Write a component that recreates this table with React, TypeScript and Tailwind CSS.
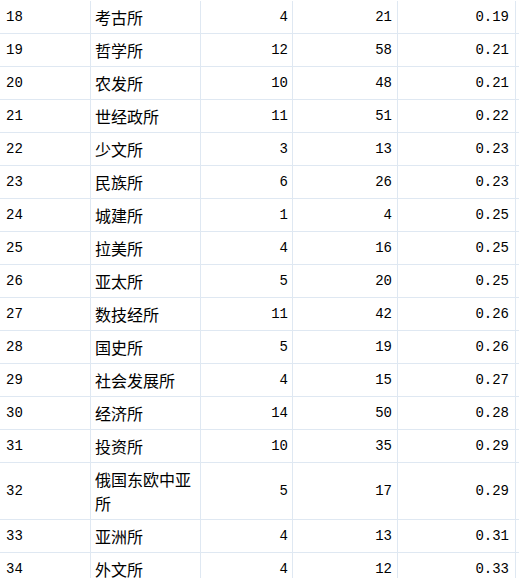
import React from "react";

const rows: [string, string, string, string, string][] = [
  ["18", "考古所", "4", "21", "0.19"],
  ["19", "哲学所", "12", "58", "0.21"],
  ["20", "农发所", "10", "48", "0.21"],
  ["21", "世经政所", "11", "51", "0.22"],
  ["22", "少文所", "3", "13", "0.23"],
  ["23", "民族所", "6", "26", "0.23"],
  ["24", "城建所", "1", "4", "0.25"],
  ["25", "拉美所", "4", "16", "0.25"],
  ["26", "亚太所", "5", "20", "0.25"],
  ["27", "数技经所", "11", "42", "0.26"],
  ["28", "国史所", "5", "19", "0.26"],
  ["29", "社会发展所", "4", "15", "0.27"],
  ["30", "经济所", "14", "50", "0.28"],
  ["31", "投资所", "10", "35", "0.29"],
  ["32", "俄国东欧中亚所", "5", "17", "0.29"],
  ["33", "亚洲所", "4", "13", "0.31"],
  ["34", "外文所", "4", "12", "0.33"],
];

const mono = "font-['Liberation_Mono','Noto_Sans_CJK_SC',monospace] text-[14px]";
const cjk = "font-['Noto_Sans_CJK_SC',sans-serif] text-[16px]";

export default function App() {
  return (
    <div className="w-[519px] h-[578px] overflow-hidden bg-white pt-[1px] text-black">
      {rows.map((r) => (
        <div
          key={r[0]}
          className="grid grid-cols-[91px_110px_92px_105px_118px] border-b border-[#dfe8f2]"
        >
          <div className={`${mono} flex items-center border-r border-[#dfe8f2] pl-[6px] py-[4px] leading-[24px]`}>
            {r[0]}
          </div>
          <div className={`${cjk} flex items-center border-r border-[#dfe8f2] pl-[4px] pr-[6px] py-[4px] leading-[24px]`}>
            {r[1]}
          </div>
          <div className={`${mono} flex items-center justify-end border-r border-[#dfe8f2] pr-[4px] py-[4px] leading-[24px]`}>
            {r[2]}
          </div>
          <div className={`${mono} flex items-center justify-end border-r border-[#dfe8f2] pr-[5px] py-[4px] leading-[24px]`}>
            {r[3]}
          </div>
          <div className={`${mono} flex items-center justify-end border-r border-[#dfe8f2] pr-[6px] py-[4px] leading-[24px]`}>
            {r[4]}
          </div>
        </div>
      ))}
    </div>
  );
}
